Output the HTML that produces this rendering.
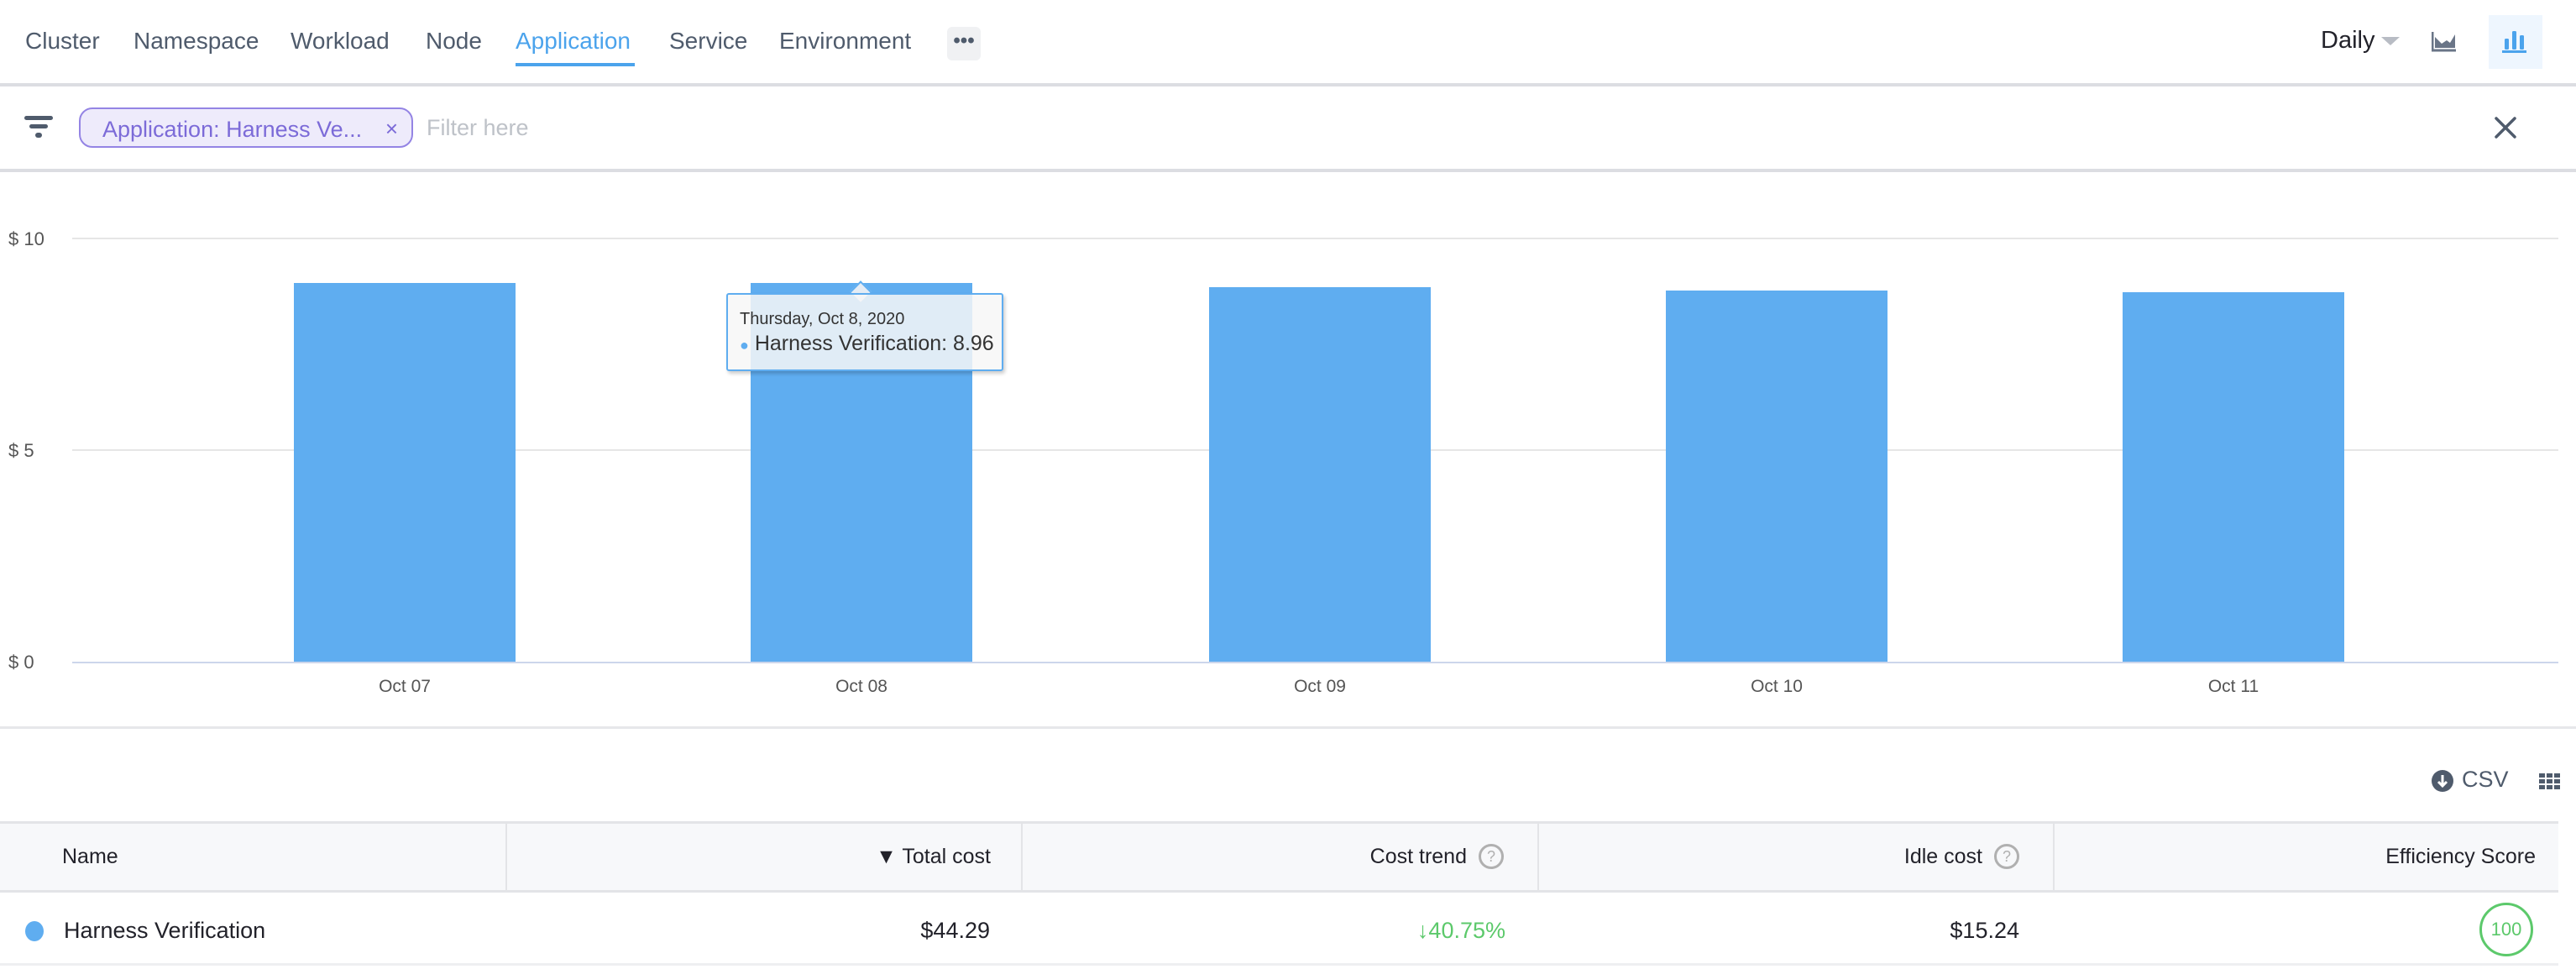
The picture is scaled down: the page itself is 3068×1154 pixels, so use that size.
<!DOCTYPE html>
<html><head><meta charset="utf-8"><style>
*{margin:0;padding:0;box-sizing:border-box}
body{width:3068px;height:1154px;background:#fff;font-family:"Liberation Sans",sans-serif;position:relative;overflow:hidden;color:#22222a}
.a{position:absolute;white-space:nowrap}
.nav{font-size:28px;color:#4f5b6c;top:33px}
.hl{position:absolute;left:0;width:3068px;height:4px;background:#dcdde2}
.gl{position:absolute;left:86px;width:2961px;height:2px;background:#e6e6e6}
.yl{font-size:22px;color:#555;left:10px}
.bar{position:absolute;background:#5fadf0;width:264px}
.xl{font-size:21px;color:#555;top:806px;transform:translateX(-50%)}
.th{font-size:25px;color:#22222a;top:1000px;height:40px;line-height:40px;display:flex;align-items:center}
.q{display:inline-block;width:30px;height:30px;border:3px solid #b0b0b0;border-radius:50%;font-size:18px;color:#b0b0b0;text-align:center;line-height:24px;margin-left:14px}
</style></head><body>
<div class="a nav" style="left:30px">Cluster</div>
<div class="a nav" style="left:159px">Namespace</div>
<div class="a nav" style="left:346px">Workload</div>
<div class="a nav" style="left:507px">Node</div>
<div class="a nav" style="left:614px;color:#4ba3ec">Application</div>
<div class="a" style="left:614px;top:75px;width:142px;height:4px;background:#4ba3ec"></div>
<div class="a nav" style="left:797px">Service</div>
<div class="a nav" style="left:928px">Environment</div>
<div class="a" style="left:1128px;top:32px;width:40px;height:40px;background:#f0f1f3;border-radius:6px;text-align:center;font-size:24px;line-height:34px;color:#4f5b6c;font-weight:bold">•••</div>
<div class="a" style="left:2764px;top:32px;font-size:29px;color:#22222a">Daily</div>
<div class="a" style="left:2836px;top:44px;width:0;height:0;border-left:11px solid transparent;border-right:11px solid transparent;border-top:10px solid #b8bcc4"></div>
<svg class="a" style="left:2896px;top:38px" width="30" height="24" viewBox="0 0 30 24"><path d="M1 0V22H29" stroke="#6a7587" stroke-width="3" fill="none"/><path d="M4 19V6L12 14L18 10L22 13L28 3V19Z" fill="#6a7587"/></svg>
<div class="a" style="left:2964px;top:18px;width:64px;height:64px;background:#eef6fe"></div>
<svg class="a" style="left:2980px;top:36px" width="30" height="28" viewBox="0 0 30 28"><rect x="3" y="10" width="5" height="13" rx="1.5" fill="#4ba3ec"/><rect x="12" y="1" width="5" height="22" rx="1.5" fill="#4ba3ec"/><rect x="21" y="6" width="5" height="17" rx="1.5" fill="#4ba3ec"/><rect x="0" y="24" width="29" height="3" fill="#4ba3ec"/></svg>
<div class="hl" style="top:99px"></div>
<svg class="a" style="left:29px;top:137px" width="34" height="28" viewBox="0 0 34 28"><rect x="0" y="1" width="34" height="5" rx="2.5" fill="#4f5b6c"/><rect x="6" y="11" width="22" height="5" rx="2.5" fill="#4f5b6c"/><rect x="13" y="21" width="8" height="6" rx="3" fill="#4f5b6c"/></svg>
<div class="a" style="left:94px;top:128px;width:398px;height:48px;background:#eeebfb;border:2px solid #9484e4;border-radius:16px;font-size:27px;color:#7c6bd8;padding:9px 0 0 26px">Application: Harness Ve...<span style="position:absolute;right:16px;top:8px;font-size:26px">×</span></div>
<div class="a" style="left:508px;top:137px;font-size:27px;color:#bec2c8">Filter here</div>
<div class="a" style="left:2970px;top:138px;width:28px;height:28px"><svg width="28" height="28" viewBox="0 0 28 28"><path d="M3 3L25 25M25 3L3 25" stroke="#4f5b6c" stroke-width="3.5" stroke-linecap="round"/></svg></div>
<div class="hl" style="top:201px"></div>
<!-- chart -->
<div class="gl" style="top:283px"></div>
<div class="gl" style="top:535px"></div>
<div class="gl" style="top:788px;background:#ccd6eb"></div>
<div class="a yl" style="top:272px">$ 10</div>
<div class="a yl" style="top:524px">$ 5</div>
<div class="a yl" style="top:776px">$ 0</div>
<div class="bar" style="left:350px;top:337px;height:451px"></div>
<div class="bar" style="left:894px;top:337px;height:451px"></div>
<div class="bar" style="left:1440px;top:342px;height:446px"></div>
<div class="bar" style="left:1984px;top:346px;height:442px"></div>
<div class="bar" style="left:2528px;top:348px;height:440px"></div>
<div class="a xl" style="left:482px">Oct 07</div>
<div class="a xl" style="left:1026px">Oct 08</div>
<div class="a xl" style="left:1572px">Oct 09</div>
<div class="a xl" style="left:2116px">Oct 10</div>
<div class="a xl" style="left:2660px">Oct 11</div>
<div class="a" style="left:1016px;top:338px;width:18px;height:18px;background:#e4ecf5;border-left:2px solid #5fadf0;border-top:2px solid #5fadf0;transform:rotate(45deg)"></div>
<div class="a" style="left:865px;top:349px;width:330px;height:93px;background:rgba(247,247,247,.85);border:2px solid #5fadf0;border-radius:3px;box-shadow:2px 3px 4px rgba(0,0,0,.2)">
<div style="position:absolute;left:14px;top:18px;font-size:20px;color:#333">Thursday, Oct 8, 2020</div>
<div style="position:absolute;left:14px;top:44px;font-size:25px;color:#333"><span style="color:#5fadf0;font-size:18px">●</span> Harness Verification: 8.96</div></div>
<div class="hl" style="top:865px;height:3px;background:#e6e7ea"></div>
<!-- csv -->
<svg class="a" style="left:2895px;top:916px" width="28" height="28" viewBox="0 0 28 28"><circle cx="14" cy="14" r="13" fill="#4f5b6c"/><path d="M14 7V20M9 15L14 20L19 15" stroke="#fff" stroke-width="3" fill="none"/></svg>
<div class="a" style="left:2932px;top:913px;font-size:27px;color:#4f5b6c">CSV</div>
<svg class="a" style="left:3024px;top:921px" width="26" height="20" viewBox="0 0 26 20"><g fill="#4f5b6c"><rect x="0" y="0" width="7" height="5"/><rect x="9" y="0" width="7" height="5"/><rect x="18" y="0" width="7" height="5"/><rect x="0" y="7" width="7" height="5"/><rect x="9" y="7" width="7" height="5"/><rect x="18" y="7" width="7" height="5"/><rect x="0" y="14" width="7" height="5"/><rect x="9" y="14" width="7" height="5"/><rect x="18" y="14" width="7" height="5"/></g></svg>
<!-- table -->
<div class="a" style="left:0;top:978px;width:3047px;height:85px;background:#f7f8fa;border-top:3px solid #e3e4e7;border-bottom:3px solid #e3e4e7"></div>
<div class="a" style="left:602px;top:981px;width:2px;height:79px;background:#e3e4e7"></div>
<div class="a" style="left:1216px;top:981px;width:2px;height:79px;background:#e3e4e7"></div>
<div class="a" style="left:1831px;top:981px;width:2px;height:79px;background:#e3e4e7"></div>
<div class="a" style="left:2445px;top:981px;width:2px;height:79px;background:#e3e4e7"></div>
<div class="a th" style="left:74px">Name</div>
<div class="a th" style="right:1888px">▼ Total cost</div>
<div class="a th" style="right:1277px">Cost trend<span class="q">?</span></div>
<div class="a th" style="right:663px">Idle cost<span class="q">?</span></div>
<div class="a th" style="right:48px">Efficiency Score</div>
<div class="a" style="left:30px;top:1097px;width:22px;height:24px;border-radius:50%;background:#5fadf0"></div>
<div class="a" style="left:76px;top:1093px;font-size:27px">Harness Verification</div>
<div class="a" style="right:1889px;top:1093px;font-size:27px">$44.29</div>
<div class="a" style="right:1275px;top:1093px;font-size:27px;color:#5cc96b">↓40.75%</div>
<div class="a" style="right:663px;top:1093px;font-size:27px">$15.24</div>
<div class="a" style="left:2953px;top:1075px;width:64px;height:64px;border:3px solid #5cc96b;border-radius:50%;font-size:22px;color:#5cc96b;text-align:center;line-height:58px">100</div>
<div class="hl" style="top:1147px;height:3px;background:#eeeff1;width:3047px"></div>
</body></html>
